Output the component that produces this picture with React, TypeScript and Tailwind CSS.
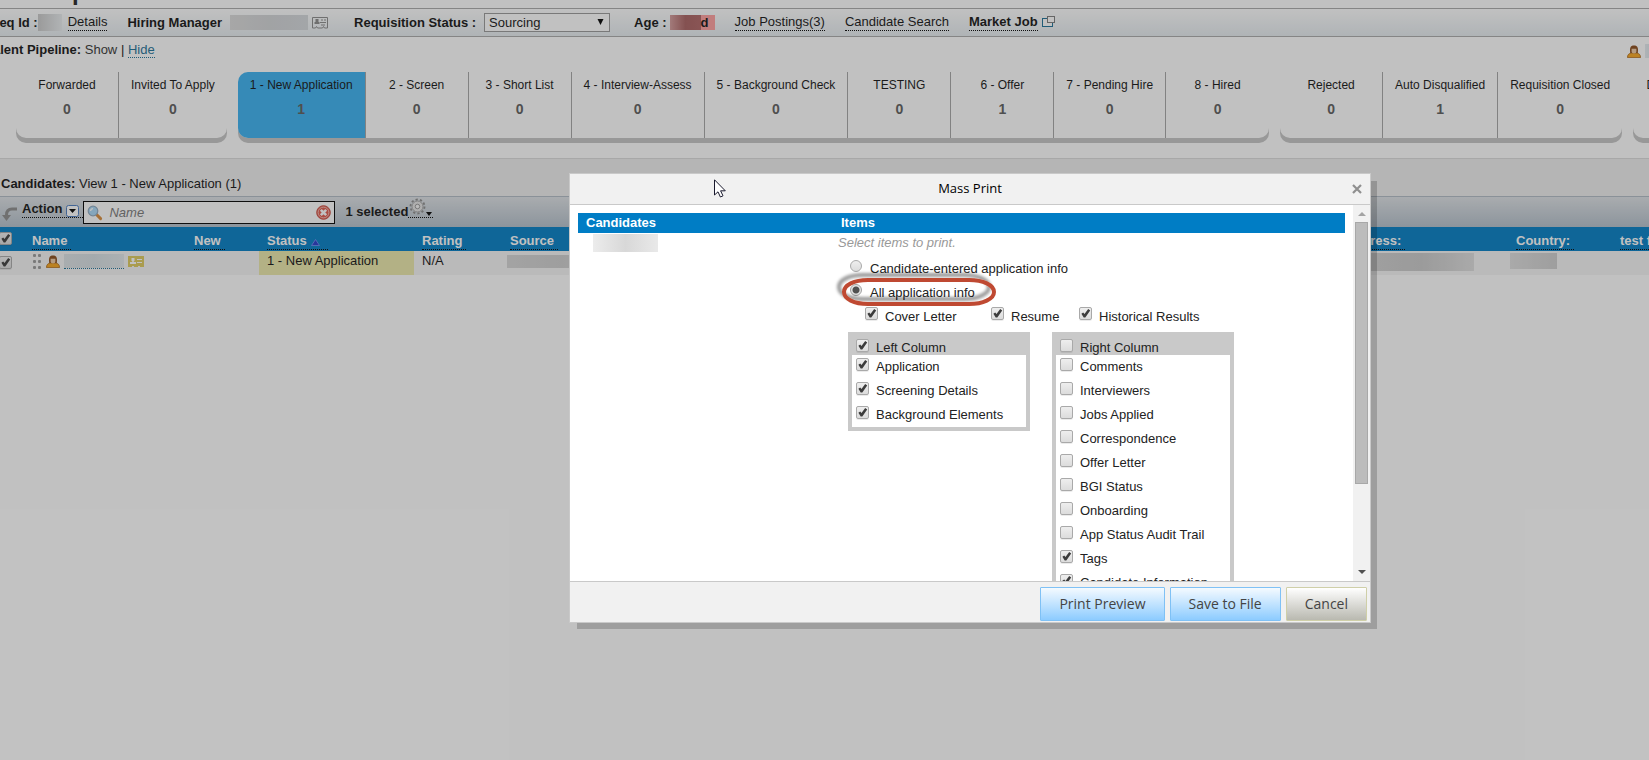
import React, { useState } from 'react';

const pipeline = [
  [
    { name: 'Forwarded', count: 0 },
    { name: 'Invited To Apply', count: 0 },
  ],
  [
    { name: '1 - New Application', count: 1, active: true },
    { name: '2 - Screen', count: 0 },
    { name: '3 - Short List', count: 0 },
    { name: '4 - Interview-Assess', count: 0 },
    { name: '5 - Background Check', count: 0 },
    { name: 'TESTING', count: 0 },
    { name: '6 - Offer', count: 1 },
    { name: '7 - Pending Hire', count: 0 },
    { name: '8 - Hired', count: 0 },
  ],
  [
    { name: 'Rejected', count: 0 },
    { name: 'Auto Disqualified', count: 1 },
    { name: 'Requisition Closed', count: 0 },
  ],
  [{ name: 'Declined Offer', count: 0 }],
];

const leftItems = ['Application', 'Screening Details', 'Background Elements'];

const rightItems = [
  { name: 'Comments', on: false },
  { name: 'Interviewers', on: false },
  { name: 'Jobs Applied', on: false },
  { name: 'Correspondence', on: false },
  { name: 'Offer Letter', on: false },
  { name: 'BGI Status', on: false },
  { name: 'Onboarding', on: false },
  { name: 'App Status Audit Trail', on: false },
  { name: 'Tags', on: true },
  { name: 'Candidate Information', on: true },
];

function Tick({ on = false, label }: { on?: boolean; label?: string }) {
  const [checked, setChecked] = useState(on);
  return (
    <span className="relative block h-[13px] w-[13px] shrink-0">
      <input
        type="checkbox"
        aria-label={label}
        checked={checked}
        onChange={() => setChecked(!checked)}
        className="block h-[13px] w-[13px] appearance-none rounded-[2px] border border-[#a9a9a9] bg-gradient-to-b from-[#eeeeee] to-[#dcdcdc] shadow-[0_1px_0_rgba(0,0,0,0.08)]"
      />
      {checked && (
        <svg viewBox="0 0 13 13" className="pointer-events-none absolute inset-0 h-[13px] w-[13px]">
          <path d="M2.4 6.8 L4.2 5.4 L5.5 7 L9.2 2 L11.2 3.4 L6.3 10.4 L4.7 10.4 Z" fill="#3c3c3c" />
        </svg>
      )}
    </span>
  );
}

function CheckRow({ name, on }: { name: string; on: boolean }) {
  return (
    <label className="flex h-6 gap-[7px] pl-1 pt-[3px] leading-[18px]">
      <Tick on={on} />
      <span>{name}</span>
    </label>
  );
}

function PersonIcon() {
  return (
    <svg viewBox="0 0 14 13" className="h-[13px] w-[14px] shrink-0">
      <path d="M0.5 12.6 C0.4 9.6 2 8.4 4.5 8 L9.5 8 C12 8.4 13.6 9.6 13.5 12.6 Z" fill="#f7a51e" stroke="#a86008" strokeWidth="0.8" />
      <path d="M3.2 8 C2.6 3 3.2 0.4 7 0.4 C10.8 0.4 11.4 3 10.8 8 Z" fill="#8a4a18" />
      <path d="M4.6 3.8 H9.4 V6.6 C9.4 7.8 8.4 8.6 7 8.6 C5.6 8.6 4.6 7.8 4.6 6.6 Z" fill="#ecc9a4" />
    </svg>
  );
}

function CardIcon({ filled = false }: { filled?: boolean }) {
  if (filled) {
    return (
      <svg viewBox="0 0 16 11" className="h-[11px] w-4 shrink-0">
        <path d="M0 0 H16 V11 H12 V10 H10 V11 H6 V10 H4 V11 H0 Z" fill="#dfcb5c" />
        <path d="M3.5 2 H6.5 V5 H5.8 V6 H8 V8 H2 V6 H4.2 V5 H3.5 Z M9 3 H14 V4 H9 Z M9 6 H14 V7 H9 Z" fill="#fff" />
      </svg>
    );
  }
  return (
    <svg viewBox="0 0 16 12" className="h-3 w-4 shrink-0">
      <path d="M0.5 0.5 H15.5 V11 H12.5 L11.5 9.5 L10.5 11 H5.5 L4.5 9.5 L3.5 11 H0.5 Z" fill="none" stroke="#8a8a8a" />
      <path d="M3.5 2 H6.5 V5 H7.5 V7 H2.5 V5 H3.5 Z M9 2.5 H11 V3.5 H9 Z M12 2.5 H14 V3.5 H12 Z M8 5 H14 V6 H8 Z M9 7.5 H13 V8.5 H9 Z" fill="#8a8a8a" />
    </svg>
  );
}

function Redacted({ className }: { className: string }) {
  return <span className={`block shrink-0 bg-gradient-to-r ${className}`} />;
}

function TopBar() {
  return (
    <div className="flex h-[29px] items-center gap-5 whitespace-nowrap border-y border-[#aaa] bg-gradient-to-b from-white to-[#e6ecf0] pl-[6px]">
      <div className="flex items-center gap-[6px]">
        <span className="flex items-center">
          <b>Req Id :</b>
          <Redacted className="h-[17px] w-6 from-[#c8c8c8] to-[#e8ecee]" />
        </span>
        <a href="#details" className="border-b border-dotted border-black leading-4">Details</a>
      </div>
      <div className="flex items-center gap-1">
        <b className="mr-1">Hiring Manager</b>
        <Redacted className="h-[15px] w-[78px] from-[#dadada] via-[#d2d4d6] to-[#d4d8dc]" />
        <CardIcon />
      </div>
      <div className="ml-[6px] flex items-center gap-2">
        <label htmlFor="status" className="font-bold">Requisition Status :</label>
        <span className="relative">
          <select id="status" className="block h-[19px] w-[126px] appearance-none border border-[#999] bg-white pl-1 leading-4">
            <option>Sourcing</option>
          </select>
          <svg viewBox="0 0 7 6" className="pointer-events-none absolute right-1.5 top-1.5 h-[6px] w-[7px]">
            <path d="M0.5 0 H6.5 L3.5 6 Z" fill="#000" />
          </svg>
        </span>
      </div>
      <div className="ml-1 flex items-center gap-[3px]">
        <b>Age :</b>
        <span className="flex h-[15px] items-center bg-[#ff9e9e] pr-[6px]">
          <Redacted className="h-[15px] w-[31px] from-[#d39a9a] via-[#a85f5f] to-[#b06464]" />
          <b className="leading-[15px]">d</b>
        </span>
      </div>
      <a href="#postings" className="border-b border-dotted border-black leading-4">Job Postings(3)</a>
      <a href="#search" className="border-b border-dotted border-black leading-4">Candidate Search</a>
      <div className="flex items-center gap-1">
        <a href="#market" className="border-b border-dotted border-black font-bold leading-4">Market Job</a>
        <svg viewBox="0 0 13 12" className="mb-[2px] h-3 w-[13px]">
          <rect x="0.5" y="2.5" width="10" height="8" fill="#fff" stroke="#1b6f96" />
          <rect x="5.5" y="0.5" width="7" height="6" fill="#fff" stroke="#7b7b7b" />
        </svg>
      </div>
    </div>
  );
}

function Pipeline() {
  return (
    <div className="flex gap-[11px] pl-8 text-center text-xs">
      {pipeline.map((group, i) => (
        <div key={i} className="flex h-[66px] shrink-0 rounded-[10px] bg-white shadow-[0_5px_0_#c4c4c4]">
          {group.map((stage, j) => (
            <a
              key={stage.name}
              href="#stage"
              className={`block min-w-[103px] whitespace-nowrap px-3 pt-[5px] leading-4 ${
                j < group.length - 1 ? 'border-r border-[#a5a5a5]' : ''
              } ${stage.active ? 'rounded-l-[10px] bg-[#38b0f1]' : ''}`}
            >
              <span className="block">{stage.name}</span>
              <b className="mt-2 block text-sm leading-4 text-[#5c5c5c]">{stage.count}</b>
            </a>
          ))}
        </div>
      ))}
    </div>
  );
}

function Toolbar() {
  return (
    <div className="flex h-[31px] items-start border-t border-[#b0bac4] bg-gradient-to-b from-[#dde1e5] to-[#b4c0cb] pl-[17px]">
      <svg viewBox="0 0 17 15" className="mr-1 mt-[10px] h-[15px] w-[17px]">
        <path d="M16 2 H11 C7 2 5.5 4 5.5 8" fill="none" stroke="#8c8c8c" strokeWidth="3" />
        <path d="M1 8 H10 L5.5 14 Z" fill="#8c8c8c" />
      </svg>
      <button className="mt-1 flex h-[17px] items-center gap-1 border-b border-dotted border-black pr-1 font-bold">
        Action
        <svg viewBox="0 0 13 12" className="mt-[3px] h-3 w-[13px]">
          <rect x="0.5" y="0.5" width="12" height="11" rx="2" fill="#fff" stroke="#4b7cc0" />
          <path d="M3 4 H10 L6.5 8 Z" fill="#000" />
        </svg>
      </button>
      <div className="mt-1 flex h-[23px] w-[252px] items-center border border-black bg-white px-[3px]">
        <svg viewBox="0 0 16 16" className="h-4 w-4 shrink-0">
          <path d="M9 9 L13.6 13.6" stroke="#d98b3a" strokeWidth="3" strokeLinecap="round" />
          <circle cx="6" cy="6" r="4.8" fill="#a9d8f8" stroke="#8fa9c0" strokeWidth="1.2" />
          <path d="M3.6 6 C3.6 4.4 4.6 3.6 6 3.6" fill="none" stroke="#fff" strokeWidth="1.3" />
        </svg>
        <input
          type="text"
          aria-label="Name"
          placeholder="Name"
          className="ml-[6px] w-full min-w-0 bg-transparent italic placeholder:text-[#777] focus:outline-none"
        />
        <svg viewBox="0 0 15 15" className="h-[15px] w-[15px] shrink-0">
          <circle cx="7.5" cy="7.5" r="6.8" fill="#e0584a" stroke="#c8483c" />
          <circle cx="7.5" cy="7.5" r="5.4" fill="none" stroke="#f4b8b0" />
          <path d="M4.8 4.8 L10.2 10.2 M10.2 4.8 L4.8 10.2" stroke="#fff" strokeWidth="2.6" />
        </svg>
      </div>
      <b className="ml-[10px] mt-1 leading-[21px]">1 selected</b>
      <button aria-label="Settings" className="mt-[3px] flex h-[18px] items-end border-b border-dotted border-black px-px">
        <svg viewBox="0 0 18 18" className="mb-[2px] h-[17px] w-[17px]">
          <circle cx="9" cy="9" r="7.4" fill="none" stroke="#8c8c8c" strokeWidth="2" strokeDasharray="2.4 2.25" />
          <circle cx="9" cy="9" r="5.8" fill="#e4e4e4" stroke="#999" strokeWidth="0.9" />
          <circle cx="9" cy="9" r="2.4" fill="#f6f6f6" stroke="#888" strokeWidth="0.9" />
        </svg>
        <svg viewBox="0 0 6 4" className="mb-px h-1 w-[6px]">
          <path d="M0 0 H6 L3 4 Z" fill="#000" />
        </svg>
      </button>
    </div>
  );
}

function HeadCell({ text, sorted = false }: { text: string; sorted?: boolean }) {
  return (
    <th className="px-2 text-left align-top font-bold">
      <a href="#sort" className="mt-[5px] flex h-[18px] w-fit items-center gap-1 whitespace-nowrap border-b border-dotted border-black pr-1 text-white">
        {text}
        {sorted && (
          <svg viewBox="0 0 9 7" className="mr-1 mt-1 h-[7px] w-[9px]">
            <path d="M4.5 0.5 L8.5 6.5 H0.5 Z" fill="#2438c8" stroke="#7f95ff" strokeWidth="0.7" />
          </svg>
        )}
      </a>
    </th>
  );
}

function CandidateTable() {
  return (
    <table className="w-full table-fixed border-collapse">
      <colgroup>
        <col className="w-10" />
        <col className="w-[162px]" />
        <col className="w-[73px]" />
        <col className="w-[155px]" />
        <col className="w-[88px]" />
        <col />
        <col className="w-[171px]" />
        <col className="w-[104px]" />
        <col className="w-[37px]" />
      </colgroup>
      <thead>
        <tr className="h-6 bg-[#007dc5]">
          <th className="pl-[15px] pt-[5px] align-top">
            <Tick on label="Select all candidates" />
          </th>
          <HeadCell text="Name" />
          <HeadCell text="New" />
          <HeadCell text="Status" sorted />
          <HeadCell text="Rating" />
          <HeadCell text="Source" />
          <HeadCell text="Address:" />
          <HeadCell text="Country:" />
          <HeadCell text="test field" />
        </tr>
      </thead>
      <tbody>
        <tr className="h-6 bg-[#f5f5f5] align-top">
          <td className="pl-[15px] pt-[5px]">
            <Tick on label="Select candidate" />
          </td>
          <td className="px-2 pt-[3px]">
            <div className="flex items-center gap-1">
              <svg viewBox="0 0 10 15" className="h-[15px] w-[10px]">
                {[0, 6, 12].map((y) => (
                  <g key={y} fill="#9a9a9a">
                    <rect x="1" y={y} width="3" height="3" rx="1" />
                    <rect x="6" y={y} width="3" height="3" rx="1" />
                  </g>
                ))}
              </svg>
              <PersonIcon />
              <a href="#candidate" aria-label="Candidate" className="block border-b border-dotted border-[#1b6f96]">
                <Redacted className="h-[14px] w-[60px] from-[#dde2e5] via-[#d6dfe3] to-[#e2e8eb]" />
              </a>
              <CardIcon filled />
            </div>
          </td>
          <td />
          <td className="bg-[#ebe8aa] px-2 leading-[19px]">1 - New Application</td>
          <td className="px-2 leading-[19px]">N/A</td>
          <td className="px-[5px] pt-1">
            <Redacted className="h-[13px] w-[110px] from-[#d5d5d5] via-[#cdcdcd] to-[#dadada]" />
          </td>
          <td className="pl-8 pt-[2px]">
            <Redacted className="h-[18px] w-[105px] from-[#cfcfcf] via-[#c9c9c9] to-[#dedede]" />
          </td>
          <td className="px-[2px] pt-[2px]">
            <Redacted className="h-4 w-[47px] from-[#dedede] to-[#cdcdcd]" />
          </td>
          <td />
        </tr>
      </tbody>
    </table>
  );
}

function MassPrintDialog() {
  return (
    <div
      role="dialog"
      aria-label="Mass Print"
      className="absolute left-[569px] top-[173px] flex h-[450px] w-[802px] flex-col border border-[#c9c9c9] bg-white text-[#222] shadow-[7px_7px_0_-1px_rgba(0,0,0,0.18)]"
    >
      <div className="relative flex h-[31px] shrink-0 items-center justify-center border-b border-[#c9c9c9] bg-[#f1f1f1]">
        <h2 className="font-['Open_Sans',sans-serif] text-[13px] text-black">Mass Print</h2>
        <button aria-label="Close" className="absolute right-2 top-[10px]">
          <svg viewBox="0 0 10 10" className="h-[10px] w-[10px]">
            <path d="M1 1 L9 9 M9 1 L1 9" stroke="#8f8f8f" strokeWidth="2.2" />
          </svg>
        </button>
      </div>

      <div className="flex min-h-0 flex-1">
        <div className="min-w-0 flex-1 overflow-hidden px-2 pt-2">
          <div className="flex h-5 items-center bg-[#007dc5] pl-2 font-bold text-white">
            <span className="w-[255px]">Candidates</span>
            <span>Items</span>
          </div>
          <div className="flex">
            <div className="w-[260px] shrink-0 pl-[15px] pt-px">
              <Redacted className="h-[18px] w-[65px] from-[#ececec] via-[#d8d8d8] to-[#e9e9e9]" />
            </div>
            <div className="min-w-0 flex-1">
              <p className="h-[25px] leading-[19px] text-[#999] italic">Select items to print.</p>
              <div className="relative pl-3">
                <label className="flex h-6 gap-2 pt-px leading-[20px]">
                  <input
                    type="radio"
                    name="scope"
                    className="mt-px h-3 w-3 appearance-none rounded-full border border-[#a9a9a9] bg-gradient-to-b from-[#eee] to-[#dcdcdc]"
                  />
                  <span>Candidate-entered application info</span>
                </label>
                <label className="flex h-6 gap-2 pt-px leading-[20px]">
                  <input
                    type="radio"
                    name="scope"
                    defaultChecked
                    className="mt-px h-3 w-3 appearance-none rounded-full border border-[#a0a0a0] bg-[radial-gradient(circle,#505050_3px,#e4e4e4_4px)]"
                  />
                  <span>All application info</span>
                </label>
                {/* highlight ring around the selected option */}
                <svg viewBox="0 0 170 44" className="pointer-events-none absolute -left-1 top-[11px] h-[44px] w-[170px] overflow-visible">
                  <defs>
                    <filter id="ring-shadow" x="-20%" y="-40%" width="140%" height="180%">
                      <feDropShadow dx="-5" dy="-5" stdDeviation="1.6" floodColor="#000" floodOpacity="0.4" />
                    </filter>
                  </defs>
                  <path
                    d="M34 11 H135 C149 11 160 16 160 23 C160 30 149 35 135 35 H34 C20 35 10 30 10 23 C10 16 20 11 34 11 Z"
                    fill="none"
                    stroke="#bf4a31"
                    strokeWidth="4"
                    filter="url(#ring-shadow)"
                  />
                </svg>
              </div>
              <div className="flex h-[26px] whitespace-nowrap pl-[27px] leading-[20px]">
                <label className="flex w-[126px] gap-[7px] pt-px">
                  <Tick on />
                  <span>Cover Letter</span>
                </label>
                <label className="flex w-[88px] gap-[7px] pt-px">
                  <Tick on />
                  <span>Resume</span>
                </label>
                <label className="flex gap-[7px] pt-px">
                  <Tick on />
                  <span>Historical Results</span>
                </label>
              </div>
              <div className="flex items-start gap-[22px] pl-[10px]">
                <div className="w-[182px] border-4 border-[#c9c9c9] bg-white">
                  <label className="flex h-[19px] gap-[7px] bg-[#c9c9c9] pl-1 pt-[3px] leading-[18px]">
                    <Tick on />
                    <span>Left Column</span>
                  </label>
                  {leftItems.map((name) => (
                    <CheckRow key={name} name={name} on />
                  ))}
                </div>
                <div className="w-[182px] border-4 border-[#c9c9c9] bg-white">
                  <label className="flex h-[19px] gap-[7px] bg-[#c9c9c9] pl-1 pt-[3px] leading-[18px]">
                    <Tick />
                    <span>Right Column</span>
                  </label>
                  {rightItems.map((item) => (
                    <CheckRow key={item.name} name={item.name} on={item.on} />
                  ))}
                </div>
              </div>
            </div>
          </div>
        </div>
        {/* Scroll bar */}
        <div className="flex w-[17px] shrink-0 flex-col items-center bg-[#f1f1f1] py-[7px]">
          <svg viewBox="0 0 8 4" className="h-1 w-2">
            <path d="M0 4 L4 0 L8 4 Z" fill="#a3a3a3" />
          </svg>
          <div className="mt-[6px] h-[262px] w-[13px] border border-[#a8a8a8] bg-[#bcbcbc]" />
          <svg viewBox="0 0 8 4" className="mt-auto h-1 w-2">
            <path d="M0 0 H8 L4 4 Z" fill="#505050" />
          </svg>
        </div>
      </div>

      <div className="flex h-[41px] shrink-0 items-end justify-end gap-[5px] border-t border-[#c9c9c9] bg-[#f1f1f1] pb-px pr-[3px] font-['Open_Sans',sans-serif] text-sm text-[#444]">
        <button className="h-[34px] rounded-[1px] border border-[#7fc1f5] bg-gradient-to-b from-[#f4faff] to-[#8ccbff] px-[18px]">Print Preview</button>
        <button className="h-[34px] rounded-[1px] border border-[#7fc1f5] bg-gradient-to-b from-[#f4faff] to-[#8ccbff] px-[18px]">Save to File</button>
        <button className="h-[34px] rounded-[1px] border border-[#cfcfa8] bg-gradient-to-b from-white to-[#b9b9b0] px-[18px]">Cancel</button>
      </div>
    </div>
  );
}

export default function App() {
  return (
    <div className="relative min-h-screen overflow-hidden bg-white font-['Liberation_Sans',Arial,sans-serif] text-[13px] text-[#111]">
      <div className="-ml-4">
        <h1 className="flex h-2 items-end pb-1 pl-[88px] text-2xl font-bold leading-6 text-[#222]">p</h1>
        <TopBar />
        <div className="flex h-[35px] items-start justify-between pl-[2px] pt-1">
          <p className="leading-[18px]">
            <b>Talent Pipeline:</b> <a href="#show" className="text-[#333]">Show</a> |{' '}
            <a href="#hide" className="border-b border-dotted border-[#1b6f96] text-[#1b6f96]">Hide</a>
          </p>
          <div className="flex items-center gap-1 pt-[3px]">
            <PersonIcon />
            <Redacted className="h-[14px] w-[4px] from-[#e4ebef] to-[#dfe7ec]" />
          </div>
        </div>
        <Pipeline />
        <div className="mt-5 h-[38px] border-t border-[#dcdcdc] bg-[#eee] pl-[17px] pt-4 leading-[18px]">
          <b>Candidates:</b> View 1 - New Application (1)
        </div>
        <Toolbar />
        <CandidateTable />
      </div>

      <div className="absolute inset-0 bg-[#333]/30" />
      <MassPrintDialog />

      {/* Mouse pointer */}
      <svg viewBox="0 0 12 19" className="pointer-events-none absolute left-[714px] top-[179px] h-[19px] w-3">
        <path d="M0.5 0.8 V16 L4 12.8 L6.4 18 L9 16.8 L6.6 11.8 H11.3 Z" fill="#fff" stroke="#1a1a2e" />
      </svg>
    </div>
  );
}
